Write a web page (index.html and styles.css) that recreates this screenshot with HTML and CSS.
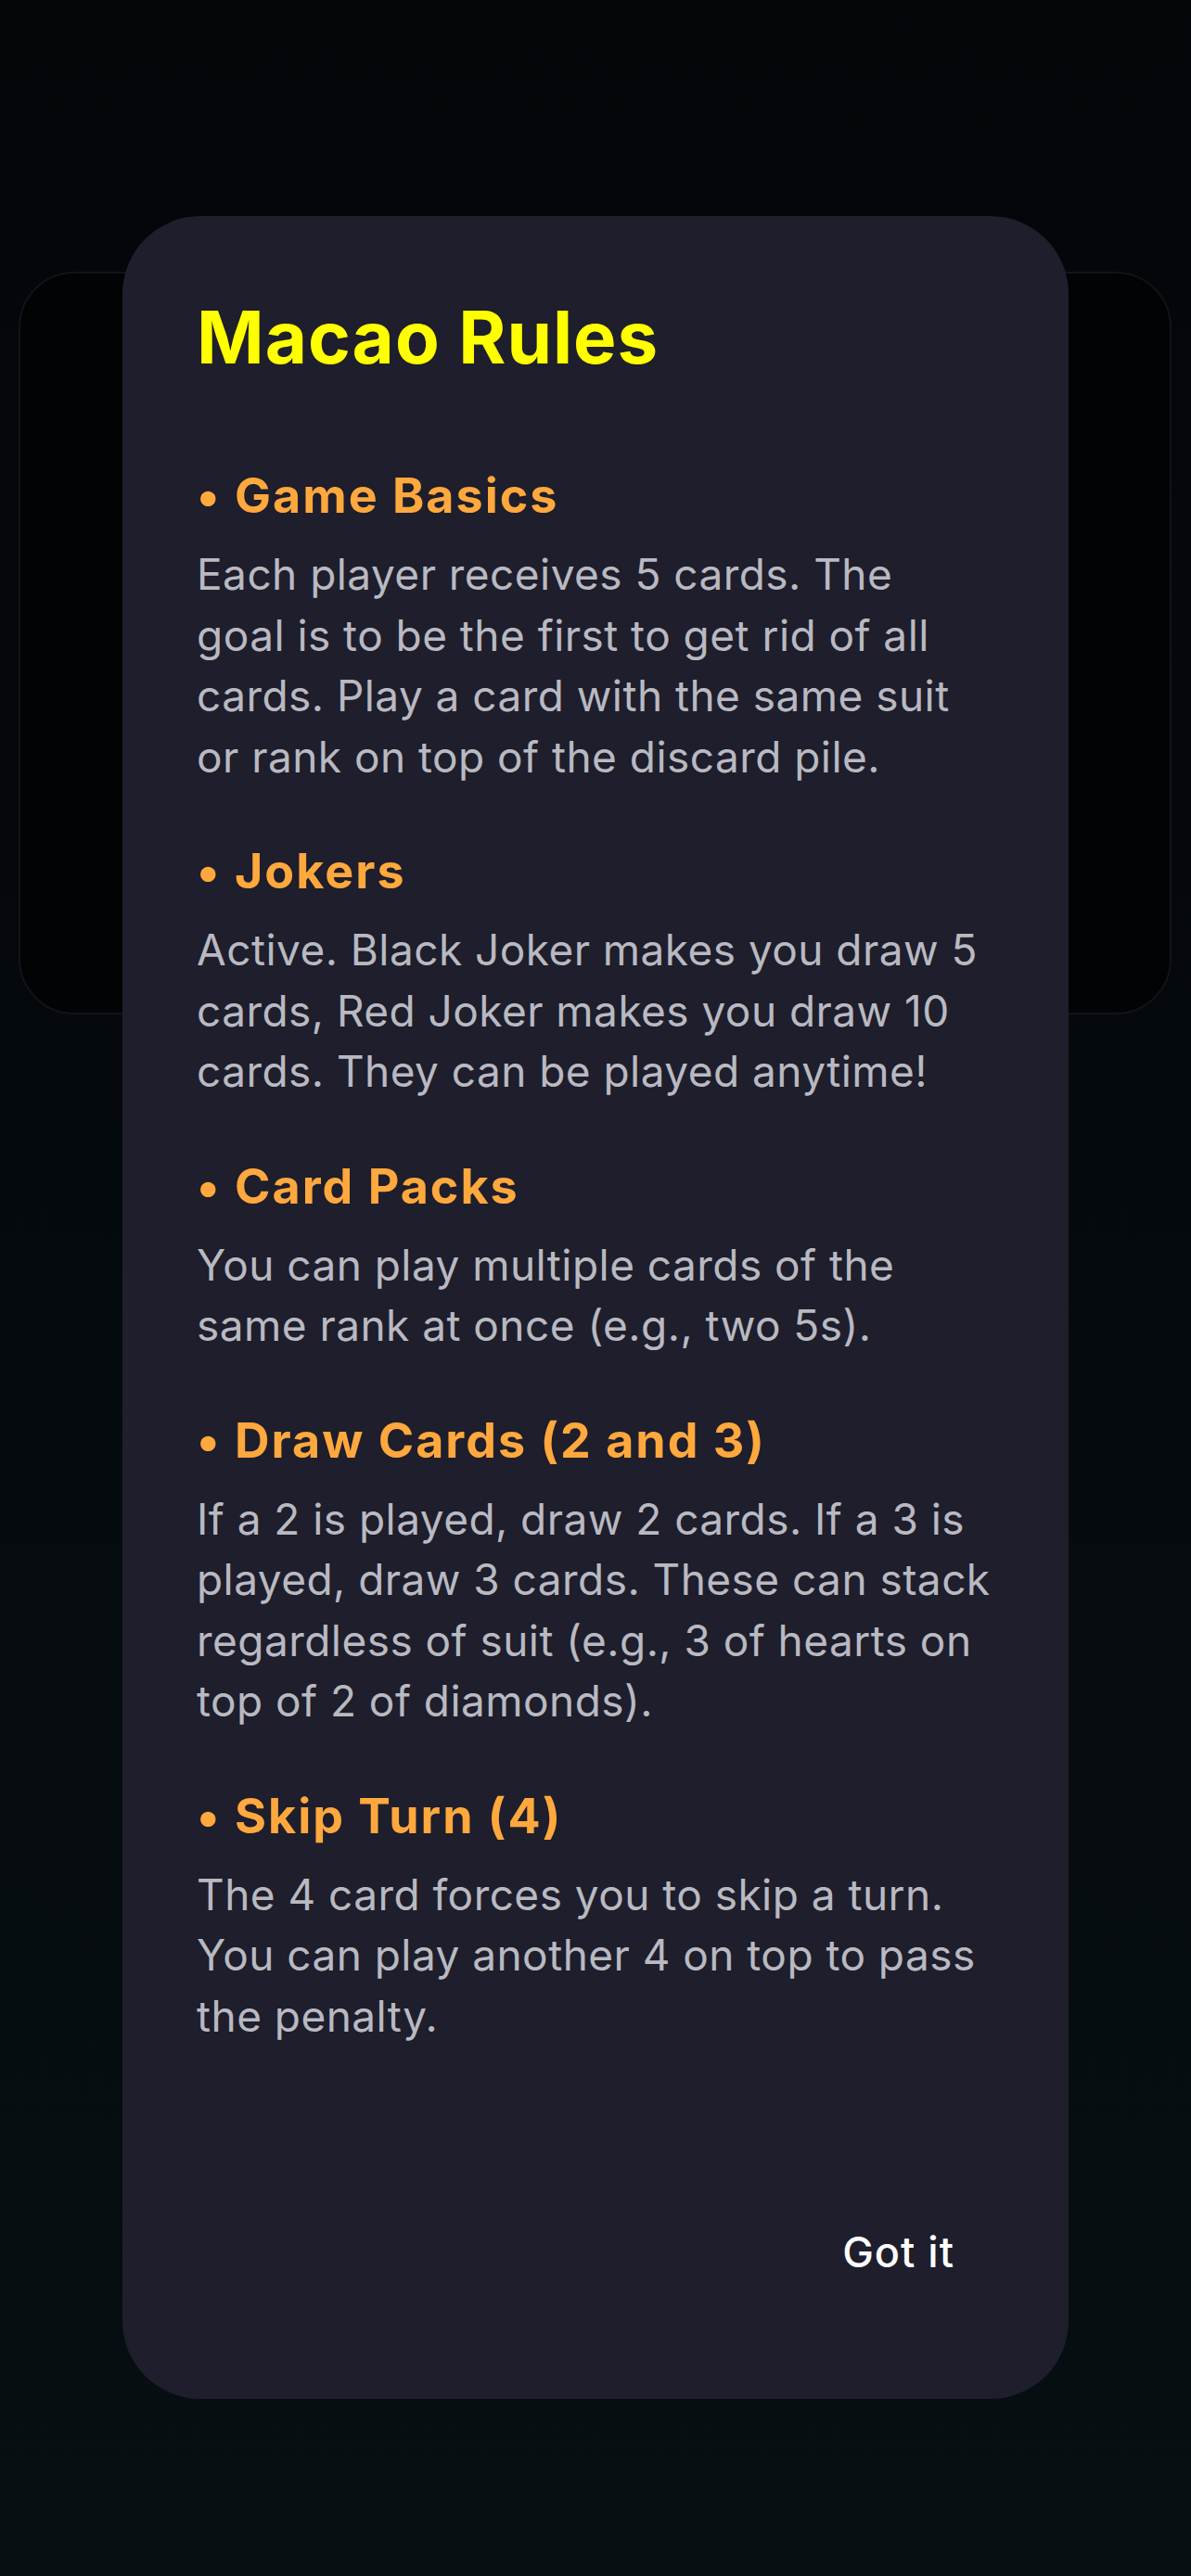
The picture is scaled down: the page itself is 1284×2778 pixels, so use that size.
FILE: index.html
```html
<!DOCTYPE html>
<html lang="en">
<head>
<meta charset="utf-8">
<title>Macao Rules</title>
<link rel="stylesheet" href="styles.css">
</head>
<body>
<main class="screen">
  <section class="back-card"></section>
</main>
<div class="overlay">
  <div class="dialog" role="dialog">
    <h1 class="title">Macao Rules</h1>
    <div class="rules">
      <div class="rule">
        <h2 class="rule-head">• Game Basics</h2>
        <p class="rule-text">Each player receives 5 cards. The goal is to be the first to get rid of all cards. Play a card with the same suit or rank on top of the discard pile.</p>
      </div>
      <div class="rule">
        <h2 class="rule-head">• Jokers</h2>
        <p class="rule-text">Active. Black Joker makes you draw 5 cards, Red Joker makes you draw 10 cards. They can be played anytime!</p>
      </div>
      <div class="rule">
        <h2 class="rule-head">• Card Packs</h2>
        <p class="rule-text">You can play multiple cards of the same rank at once (e.g., two 5s).</p>
      </div>
      <div class="rule">
        <h2 class="rule-head">• Draw Cards (2 and 3)</h2>
        <p class="rule-text">If a 2 is played, draw 2 cards. If a 3 is played, draw 3 cards. These can stack regardless of suit (e.g., 3 of hearts on top of 2 of diamonds).</p>
      </div>
      <div class="rule">
        <h2 class="rule-head">• Skip Turn (4)</h2>
        <p class="rule-text">The 4 card forces you to skip a turn. You can play another 4 on top to pass the penalty.</p>
      </div>
    </div>
    <div class="actions">
      <button class="btn-text" type="button">Got it</button>
    </div>
  </div>
</div>
</body>
</html>
```

FILE: styles.css
```css
* { box-sizing: border-box; }

html, body {
  margin: 0;
  padding: 0;
}

body {
  width: 1284px;
  min-height: 2778px;
  background: linear-gradient(180deg, #030509 0%, #050a0e 50%, #070f13 100%);
  font-family: Inter, "Noto Sans", "Liberation Sans", sans-serif;
  position: relative;
  overflow: hidden;
}

.screen {
  padding: 293px 21px 0 20px;
}

.back-card {
  height: 801px;
  border-radius: 60px;
  background: #020305;
  border: 2px solid #121318;
}

.overlay {
  position: absolute;
  inset: 0;
  display: flex;
  justify-content: center;
  align-items: flex-start;
  padding-top: 233px;
}

.dialog {
  width: 1020px;
  height: 2354px;
  background: #1e1e2c;
  border-radius: 84px;
  padding: 84px 84px 107px 80px;
  display: flex;
  flex-direction: column;
}

.title {
  margin: 0 0 93px 0;
  color: #ffff00;
  font-size: 78px;
  line-height: 94px;
  font-weight: 700;
  letter-spacing: 1px;
}

.rules {
  display: flex;
  flex-direction: column;
  gap: 60px;
}

.rule-head {
  margin: 0 0 21px 0;
  color: #ffa83d;
  font-size: 52px;
  line-height: 62px;
  font-weight: 700;
  letter-spacing: 2px;
}

.rule-text {
  margin: 0;
  color: #b9b9c1;
  font-size: 46px;
  line-height: 65.5px;
  font-weight: 400;
  letter-spacing: 0.45px;
}

.actions {
  margin-top: auto;
  display: flex;
  justify-content: flex-end;
}

.btn-text {
  background: none;
  border: 0;
  color: #ffffff;
  font-family: Inter, "Noto Sans", "Liberation Sans", sans-serif;
  font-size: 45px;
  line-height: 54px;
  font-weight: 500;
  letter-spacing: 1px;
  padding: 24px 39px 24px 43px;
  border-radius: 40px;
}
```
